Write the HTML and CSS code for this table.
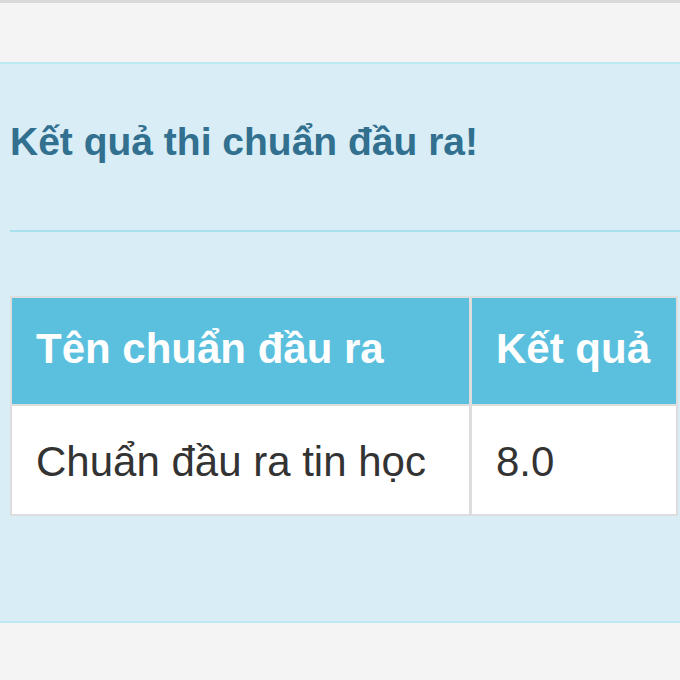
FILE: index.html
```html
<!DOCTYPE html>
<html lang="vi">
<head>
<meta charset="utf-8">
<link rel="stylesheet" href="styles.css">
</head>
<body>
<div class="topbar"></div>
<div class="panel">
  <h3 class="title">Kết quả thi chuẩn đầu ra!</h3>
  <hr class="rule">
  <table class="results">
    <thead>
      <tr><th class="col-name">Tên chuẩn đầu ra</th><th class="col-score">Kết quả</th></tr>
    </thead>
    <tbody>
      <tr><td>Chuẩn đầu ra tin học</td><td>8.0</td></tr>
    </tbody>
  </table>
</div>
</body>
</html>
```
FILE: styles.css
```css
html, body {
  margin: 0;
  padding: 0;
  background: #f4f4f4;
  overflow: hidden;
  font-family: "Liberation Sans", Arial, sans-serif;
}
.topbar {
  height: 3px;
  background: #d9d9d9;
  margin-bottom: 59px;
}
.panel {
  background: #d9edf7;
  border-top: 2px solid #bce8f1;
  border-bottom: 2px solid #bce8f1;
  padding: 56px 0 105px 10px;
  width: 700px;
}
.title {
  margin: 0;
  font-size: 39px;
  line-height: 43px;
  font-weight: bold;
  color: #31708f;
}
.rule {
  margin: 67px 0 0 0;
  border: 0;
  border-top: 2px solid #a6e1ec;
  height: 0;
}
.results {
  margin-top: 64px;
  border-collapse: collapse;
  width: 668px;
  font-size: 42px;
  line-height: 60px;
}
.results th,
.results td {
  border: 2px solid #dddddd;
  text-align: left;
  white-space: nowrap;
}
.results th {
  background: #5bc0de;
  color: #ffffff;
  font-weight: bold;
  padding: 21px 24px 25px 24px;
}
.results td {
  background: #ffffff;
  color: #333333;
  padding: 26px 24px 22px 24px;
}
.col-name {
  width: 409px;
}
.results th + th,
.results td + td {
  border-left-width: 3px;
}
```
